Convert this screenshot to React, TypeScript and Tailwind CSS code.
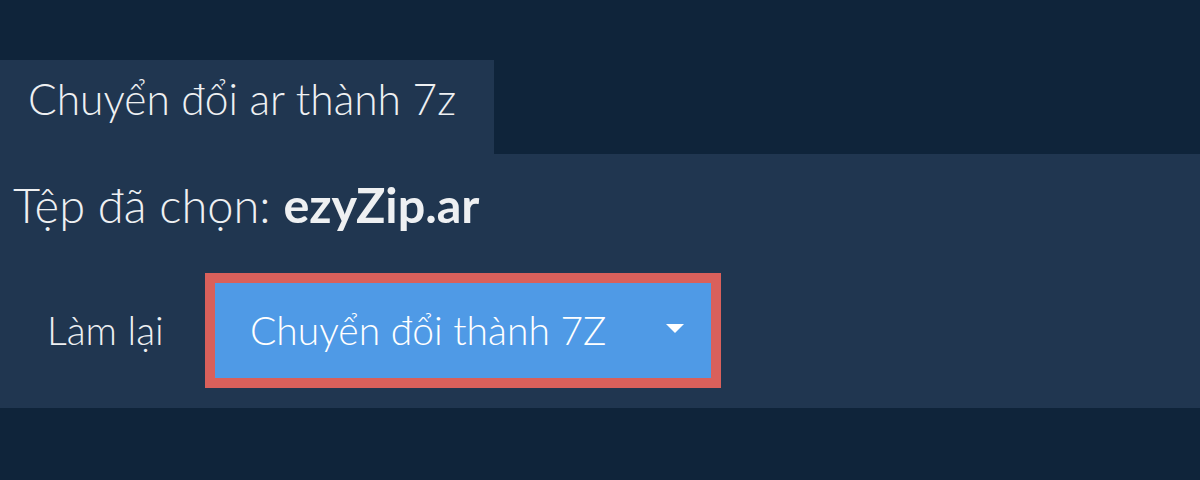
export default function App() {
  return (
    <div className="w-[1200px] h-[480px] bg-[#0f243a] overflow-hidden" style={{ fontFamily: "'Lato Light', Lato, 'Noto Sans', sans-serif" }}>
      <div className="h-[60px]" />
      <div className="w-[494px] h-[94px] bg-[#203650] pl-[28px] pt-[18px]">
        <span className="block text-[42.5px] font-light text-[#eef0f2] leading-none">Chuyển đổi ar thành 7z</span>
      </div>
      <div className="bg-[#203650] h-[254px] flex flex-col">
        <div className="h-[110px] flex items-center pl-[13px] pb-[10px]">
          <span className="text-[47px] font-light text-[#eef0f2] leading-none">
            Tệp đã chọn: <span className="font-bold text-[48.5px]" style={{ fontFamily: "Lato, sans-serif" }}>ezyZip.ar</span>
          </span>
        </div>
        <div className="flex items-center h-[115px] mt-[9px]">
          <span className="text-[39px] font-light text-[#eef0f2] leading-none pl-[47px] w-[205px]">Làm lại</span>
          <div className="w-[516px] h-[115px] bg-[#d9605b] p-[10px]">
            <div className="w-full h-full bg-[#4f9ae6] flex items-center justify-between pl-[35px] pr-[27px]">
              <span className="text-[39px] font-light text-white leading-none">Chuyển đổi thành 7Z</span>
              <svg className="mb-[4px]" width="18" height="9" viewBox="0 0 18 9"><path d="M0 0 L18 0 L9 9 Z" fill="#ffffff" /></svg>
            </div>
          </div>
        </div>
      </div>
    </div>
  );
}
